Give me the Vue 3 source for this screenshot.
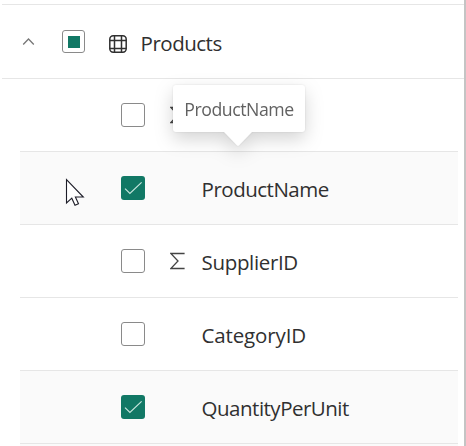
<script setup>
const fields = [
  { name: '', sum: true, checked: false },
  { name: 'ProductName', cls: 'product', sum: false, checked: true },
  { name: 'SupplierID', cls: 'supplier', sum: true, checked: false },
  { name: 'CategoryID', cls: 'category', sum: false, checked: false },
  { name: 'QuantityPerUnit', cls: 'quantity', sum: false, checked: true },
]
</script>

<template>
  <main class="panel">
    <header class="table-row">
      <svg class="chevron" width="14" height="10" viewBox="0 0 14 10"><path d="M1.2 7.5 6.5 2 11.8 7.5" /></svg>
      <span class="box mixed"><i></i></span>
      <svg class="grid" width="20" height="20" viewBox="0 0 20 20">
        <rect x="1.8" y="1.8" width="16.4" height="16.4" rx="3.4" />
        <path d="M6.5 1.8v16.4M13.5 1.8v16.4M1.8 6.5h16.4M1.8 14.5h16.4" />
      </svg>
      <span class="label title">Products</span>
    </header>
    <section class="fields">
      <div v-for="(f, i) in fields" :key="i" class="row" :class="{ selected: f.checked }">
        <span class="box" :class="{ checked: f.checked }">
          <svg v-if="f.checked" width="24" height="24" viewBox="0 0 24 24"><path d="M4 12.6 8.9 17.5 20.6 6.4" /></svg>
        </span>
        <span class="type">
          <svg v-if="f.sum" width="16" height="18" viewBox="0 0 16 18"><path d="M14.6 1.5H.8L8 9 .8 16.5H14.6" /></svg>
        </span>
        <span class="label" :class="f.cls">{{ f.name }}</span>
      </div>
      <div class="row selected"></div>
    </section>
    <div class="tooltip"><span>ProductName</span></div>
    <svg class="cursor" width="20" height="29" viewBox="0 0 20 29">
      <path d="M1.5 1.5V25L6.8 20.2 10 27.2 13.5 25.8 10.4 19H18.3Z" />
    </svg>
  </main>
</template>

<style>
body { margin: 0; overflow: hidden; background: #fff; }
</style>

<style scoped>
.panel {
  position: relative;
  box-sizing: border-box;
  width: 466px;
  height: 446px;
  padding: 4px 0 0 2px;
  overflow: hidden;
  border-right: 2px solid #c4c4c4;
  background: #fff;
  color: #303030;
  font-family: "Open Sans", "Noto Sans", sans-serif;
  font-size: 20.5px;
}
svg { display: block; fill: none; }
.table-row {
  display: flex;
  align-items: center;
  box-sizing: border-box;
  height: 75px;
  padding-left: 20px;
  border-top: 1px solid #e6e6e6;
  border-bottom: 1px solid #e6e6e6;
}
.chevron { stroke: #777; stroke-width: 1.3; margin-right: 26px; }
.box {
  display: block;
  box-sizing: border-box;
  flex: none;
  width: 24px;
  height: 24px;
  border: 1px solid #8a8a8a;
  border-radius: 3px;
  background: #fff;
}
.mixed { display: grid; place-items: center; width: 23px; height: 23px; }
.mixed i { width: 12px; height: 12px; background: #117865; }
.checked { border: 0; background: #117865; }
.checked path { stroke: #c6e5dd; stroke-width: 1.2; }
.grid { margin: 4px 0 0 23px; stroke: #303030; stroke-width: 1.5; }
.fields { margin: 0 6px 0 18px; }
.row {
  display: flex;
  align-items: center;
  box-sizing: border-box;
  height: 73px;
  padding-left: 101px;
  border-bottom: 1px solid #e6e6e6;
}
.selected { background: #fafafa; }
.type { width: 16px; margin: 0 15.6px 0 25px; }
.type path { stroke: #444; stroke-width: 1.3; }
.label { line-height: 28px; white-space: nowrap; padding-top: 1px; letter-spacing: -.5px; }
.title { margin-left: 12.6px; padding-top: 2px; }
.supplier { letter-spacing: -.35px; }
.category { letter-spacing: -.15px; }
.quantity { letter-spacing: -.5px; }
.tooltip {
  position: absolute;
  left: 173px;
  top: 85px;
  display: grid;
  place-items: center;
  width: 132px;
  height: 47px;
  border-radius: 3px;
  background: #fff;
  color: #616161;
  font-size: 17.7px;
  letter-spacing: -.45px;
  filter: drop-shadow(0 0 1px rgba(0, 0, 0, .1)) drop-shadow(0 7px 9px rgba(0, 0, 0, .17));
}
.tooltip::after {
  content: "";
  position: absolute;
  left: 50px;
  top: 46px;
  width: 30px;
  height: 15px;
  background: #fff;
  clip-path: polygon(0 0, 100% 0, 54% 95%, 50% 100%, 46% 95%);
}
.cursor { position: absolute; left: 65px; top: 178px; }
.cursor path { fill: #fff; stroke: #1d1d28; stroke-width: 1.1; }
</style>
